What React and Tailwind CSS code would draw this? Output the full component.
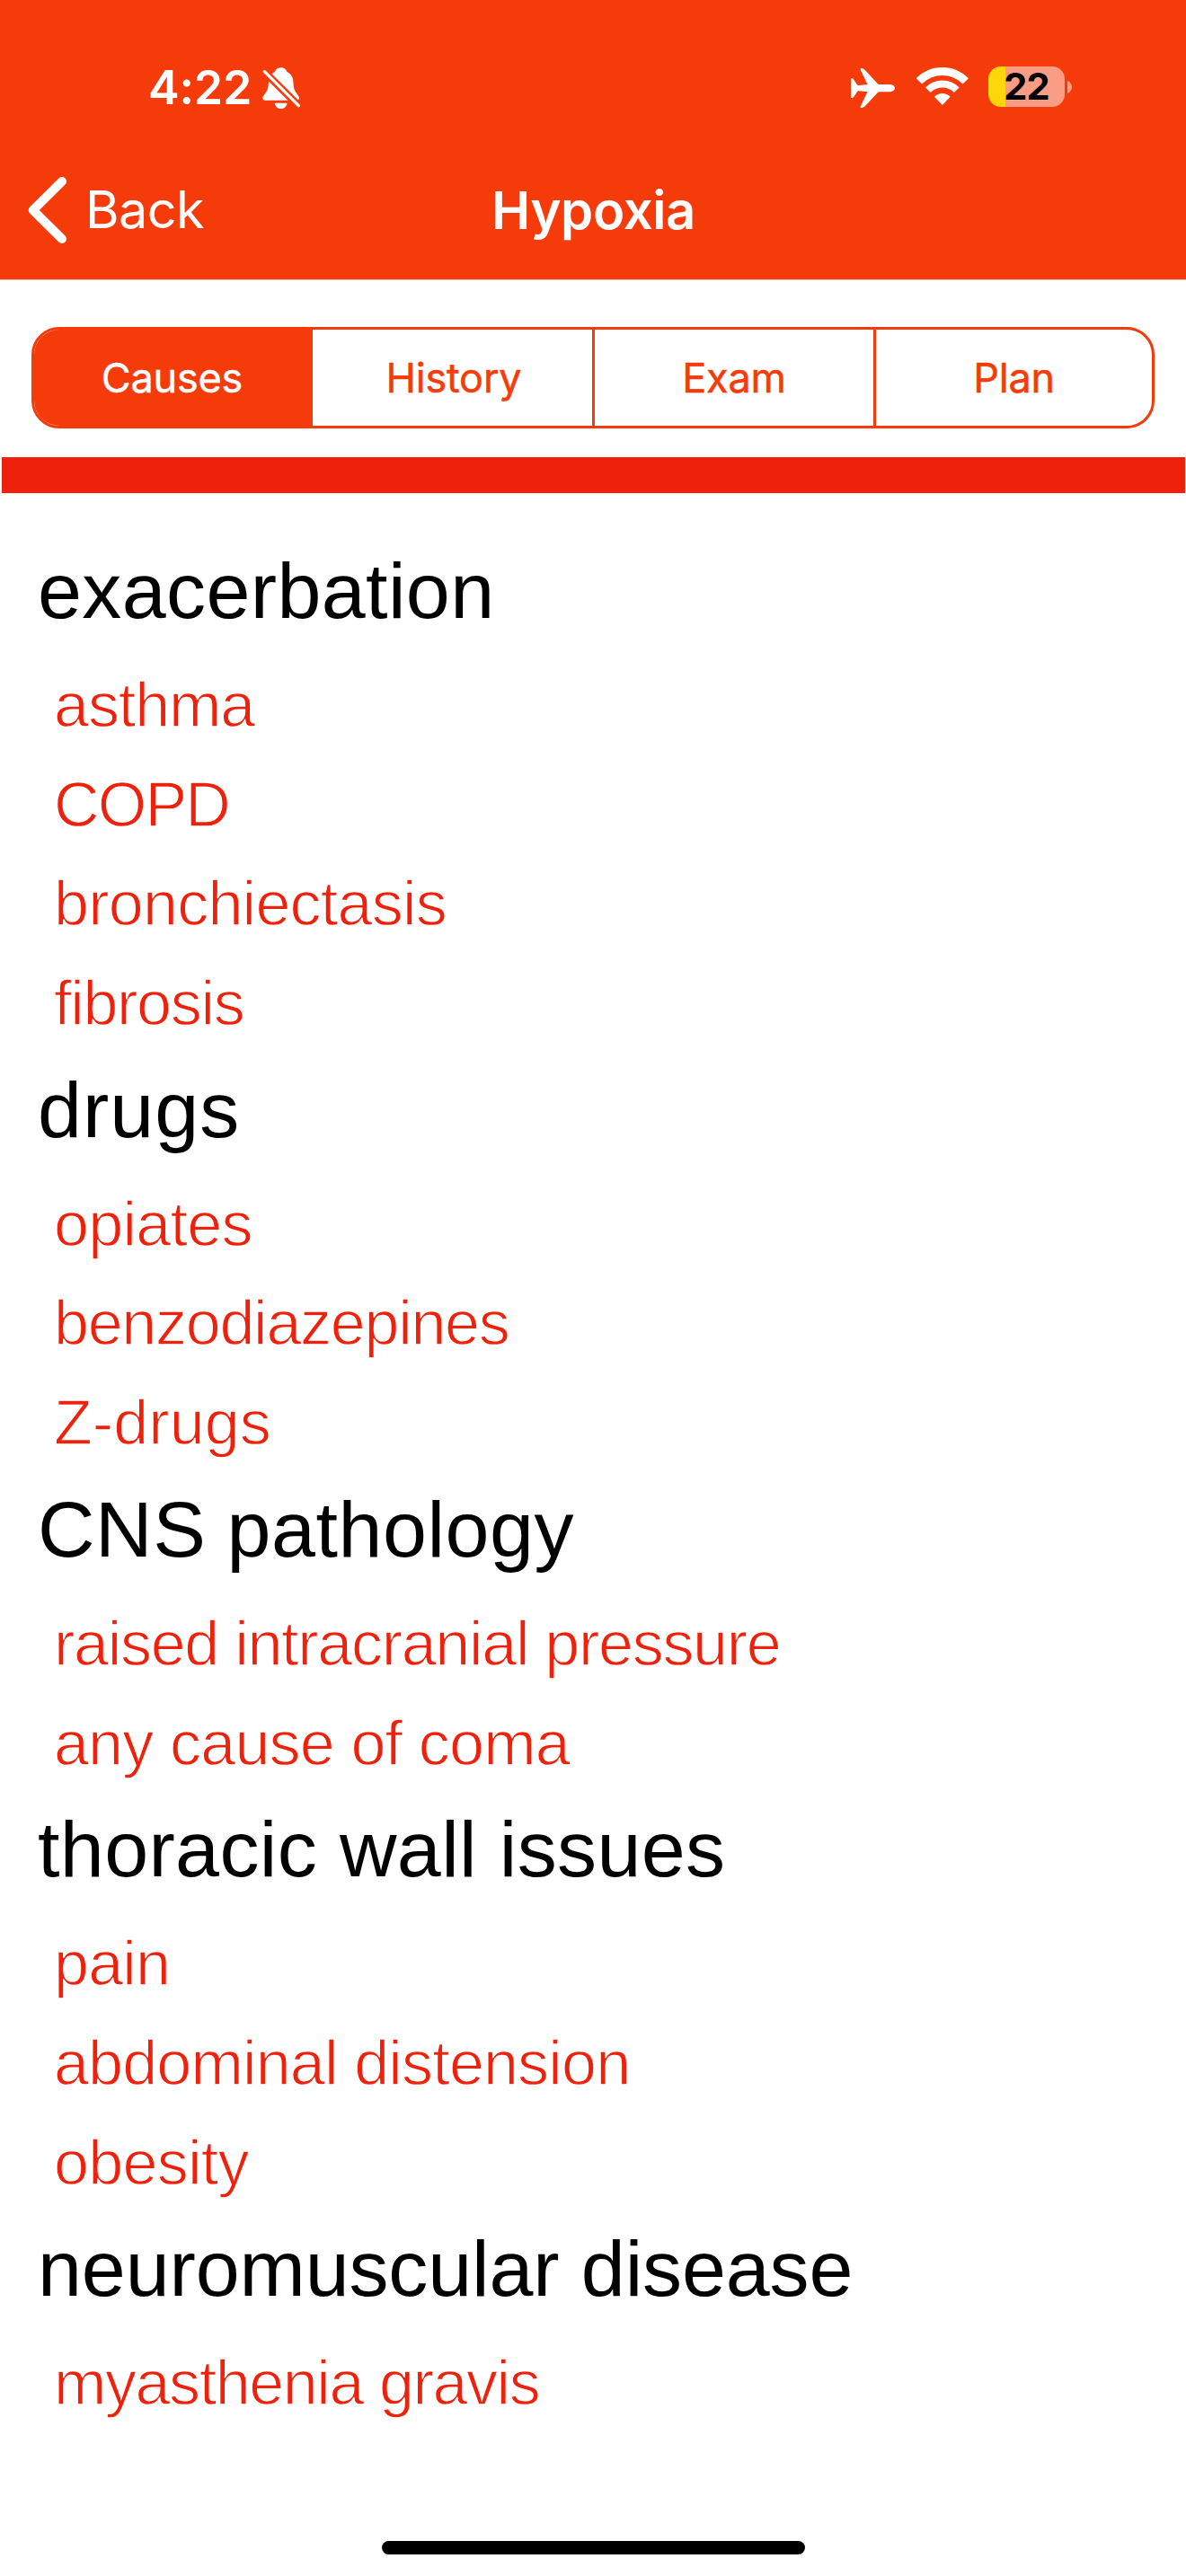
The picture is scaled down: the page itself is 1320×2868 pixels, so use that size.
import React from "react";

const sections = [
  {
    title: "exacerbation",
    tracking: "tracking-[0.38px]",
    items: [
      ["asthma", "tracking-[-1.05px]"],
      ["COPD", "tracking-[-1.8px]"],
      ["bronchiectasis", "tracking-[-0.74px]"],
      ["fibrosis", "tracking-[-1.28px]"],
    ],
  },
  {
    title: "drugs",
    tracking: "tracking-[1px]",
    items: [
      ["opiates", "tracking-[-0.7px]"],
      ["benzodiazepines", "tracking-[-1.26px]"],
      ["Z-drugs", "tracking-[0.1px]"],
    ],
  },
  {
    title: "CNS pathology",
    tracking: "tracking-[0.55px] [word-spacing:-2px]",
    items: [
      ["raised intracranial pressure", "tracking-[-1.28px]"],
      ["any cause of coma", "tracking-[-0.81px]"],
    ],
  },
  {
    title: "thoracic wall issues",
    tracking: "tracking-[0.37px]",
    items: [
      ["pain", "tracking-[-0.8px]"],
      ["abdominal distension", "tracking-[-0.82px]"],
      ["obesity", "tracking-[-0.7px]"],
    ],
  },
  {
    title: "neuromuscular disease",
    tracking: "tracking-[-0.12px]",
    items: [["myasthenia gravis", "tracking-[-1.4px]"]],
  },
];

const tabs = ["Causes", "History", "Exam", "Plan"];

function BellOffIcon() {
  return (
    <svg viewBox="38 28 128 140" className="h-[46.7px] w-[42.7px]" fill="none">
      <path
        fill="#fff"
        d="M100 29C88 29 82 36 80 43C68 49 60 58 59 74C58 98 56 104 46 117C41 123 39 127 39 131Q39 138 47 138H153Q161 138 161 131C161 127 159 123 154 117C144 104 142 98 141 74C140 58 132 49 120 43C118 36 112 29 100 29Z"
      />
      <path fill="#fff" d="M79 147H121C119 159 111 166 100 166C89 166 81 159 79 147Z" />
      <path stroke="#f63b0a" strokeWidth="25" d="M34 32L161 158" />
      <path stroke="#fff" strokeWidth="10" strokeLinecap="round" d="M45 42L159 156" />
    </svg>
  );
}

function PlaneIcon() {
  return (
    <svg viewBox="36 33 147 132" className="h-[44px] w-[49px]" fill="#fff">
      <path d="M183 99C183 92 175 87 163 87H135C130 87 128 87 125 84L84 40C80 35 76 34 68 34V38L90 84C91 87 90 88 88 88L62 90C59 90 58 89 56 87L46 71C44 68 42 67 36 67V132C42 132 44 131 46 128L56 113C58 110 59 109 62 109L88 111C90 111 91 112 90 115L68 161V165C76 165 80 164 84 159L125 115C128 112 130 112 135 112H163C175 112 183 106 183 99Z" />
    </svg>
  );
}

function WifiIcon() {
  return (
    <svg viewBox="254 30 173 127" className="-mt-[4px] h-[42.3px] w-[57.6px]" fill="none" stroke="#fff">
      <path strokeWidth="27" d="M262.4 76A109.5 109.5 0 0 1 418.6 76" />
      <path strokeWidth="24" d="M292.6 106A67 67 0 0 1 388.4 106" />
      <path fill="#fff" stroke="none" d="M314 128C328 113.500 353 113.500 367 128L342 155Q340.500 156.500 339 155Z" />
    </svg>
  );
}

function Battery() {
  return (
    <div className="-mt-[3px] flex items-center gap-[3px]">
      <div className="flex h-[45px] w-[85px] items-center justify-center rounded-[14px] bg-[linear-gradient(to_right,#ffd60a_19px,#fb9d84_19px)] text-[41.5px] leading-none font-bold tracking-[-0.83px] text-black">
        22
      </div>
      <svg viewBox="0 0 5 14" className="h-[14px] w-[5px]" fill="#fb9d84">
        <path d="M0 0C3 1 5 4 5 7S3 13 0 14Z" />
      </svg>
    </div>
  );
}

export default function App() {
  return (
    <div className="flex h-[2868px] w-[1320px] flex-col overflow-hidden bg-white">
      <header className="h-[311px] bg-[#f63b0a] font-[Inter,sans-serif] text-white">
        <div className="flex h-[156px] items-center justify-between pt-[40px] pr-[127px] pl-[165px]">
          <div className="flex items-center gap-[12px]">
            <span className="text-[52px] leading-none font-semibold tracking-[-0.2px]">4:22</span>
            <BellOffIcon />
          </div>
          <div className="flex items-center">
            <PlaneIcon />
            <div className="ml-[24px] flex items-center gap-[22px]">
              <WifiIcon />
              <Battery />
            </div>
          </div>
        </div>
        <div className="grid h-[155px] grid-cols-[1fr_auto_1fr] items-center">
          <div className="flex items-center gap-[21px] pl-[31px]">
            <svg viewBox="93 441 129 222" className="h-[74px] w-[43px]" fill="none" stroke="#fff">
              <path strokeWidth="30" strokeLinecap="round" strokeLinejoin="round" d="M207 456L110 552L207 648" />
            </svg>
            <span className="text-[57.5px] leading-none tracking-[-0.59px]">Back</span>
          </div>
          <h1 className="pl-[1px] text-[58px] leading-none font-semibold tracking-[-0.39px]">Hypoxia</h1>
        </div>
      </header>

      <nav className="border-t border-[#d9cdc9] px-[35px] pt-[52px] pb-[32px]">
        <div className="grid h-[113px] grid-cols-[310px_311px_313px_310px] overflow-hidden rounded-[31px] border-[3px] border-[#f63b0a] bg-white font-[Inter,sans-serif] text-[45px] tracking-[-0.2px] text-[#f63b0a] [-webkit-text-stroke:0.5px_currentColor]">
          {tabs.map((tab, i) => (
            <button
              key={tab}
              className={
                i === 0
                  ? "bg-[#f63b0a] pr-[3px] text-white"
                  : i === 1
                  ? "pl-[3px]"
                  : "border-l-[3px] border-[#f63b0a]"
              }
            >
              {tab}
            </button>
          ))}
        </div>
      </nav>

      <div className="mr-[1px] ml-[2px] h-[40px] shrink-0 bg-[#ee220c]" />

      <main className="flex-1 pt-[46px] font-['Liberation_Sans',Arial,sans-serif]">
        {sections.map((section) => (
          <section key={section.title}>
            <h2 className={`pb-[8.15px] pl-[42px] text-[88px] leading-[126.9px] text-black ${section.tracking}`}>
              {section.title}
            </h2>
            <ul>
              {section.items.map(([label, tracking]) => (
                <li
                  key={label}
                  className={`pl-[60px] text-[70px] leading-[110.67px] text-[#ee220c] [-webkit-text-stroke:1.3px_white] ${tracking}`}
                >
                  {label}
                </li>
              ))}
            </ul>
          </section>
        ))}
      </main>

      <div className="mb-[24px] h-[15px] w-[471px] shrink-0 self-center rounded-full bg-black" />
    </div>
  );
}
